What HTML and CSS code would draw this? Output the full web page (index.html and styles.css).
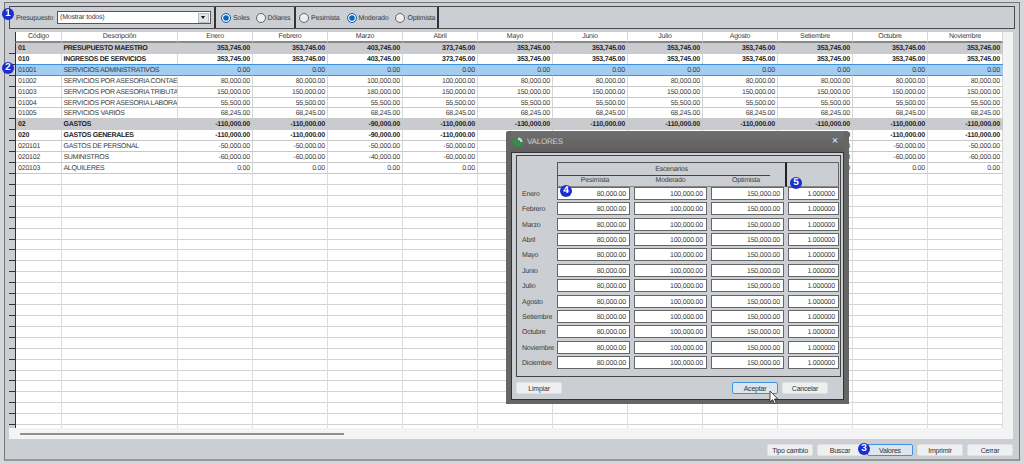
FILE: index.html
```html
<!DOCTYPE html>
<html lang="es">
<head>
<meta charset="utf-8">
<title>Presupuesto</title>
<link rel="stylesheet" href="styles.css">
</head>
<body>
<div class="window">
  <div class="toolbar">
    <div class="tgroup first">
      <span class="lbl">Presupuesto</span>
      <div class="select"><span>(Mostrar todos)</span><i class="drop"></i></div>
    </div>
    <div class="tgroup cur">
      <span class="radio on">Soles</span><span class="radio">Dólares</span>
    </div>
    <div class="tgroup esc">
      <span class="radio">Pesimista</span><span class="radio on">Moderado</span><span class="radio">Optimista</span>
    </div>
  </div>

  <div class="grid-wrap">
    <div class="grid">
      <div class="row head"><b class="rh"></b><b class="c">Código</b><b class="c">Descripción</b><b class="c">Enero</b><b class="c">Febrero</b><b class="c">Marzo</b><b class="c">Abril</b><b class="c">Mayo</b><b class="c">Junio</b><b class="c">Julio</b><b class="c">Agosto</b><b class="c">Setiembre</b><b class="c">Octubre</b><b class="c">Noviembre</b></div>
      <div class="row group"><b class="rh"></b><b>01</b><b>PRESUPUESTO MAESTRO</b><b>353,745.00</b><b>353,745.00</b><b>403,745.00</b><b>373,745.00</b><b>353,745.00</b><b>353,745.00</b><b>353,745.00</b><b>353,745.00</b><b>353,745.00</b><b>353,745.00</b><b>353,745.00</b></div>
      <div class="row strong"><b class="rh"></b><b>010</b><b>INGRESOS DE SERVICIOS</b><b>353,745.00</b><b>353,745.00</b><b>403,745.00</b><b>373,745.00</b><b>353,745.00</b><b>353,745.00</b><b>353,745.00</b><b>353,745.00</b><b>353,745.00</b><b>353,745.00</b><b>353,745.00</b></div>
      <div class="row sel"><b class="rh"></b><b>01001</b><b>SERVICIOS ADMINISTRATIVOS</b><b>0.00</b><b>0.00</b><b>0.00</b><b>0.00</b><b>0.00</b><b>0.00</b><b>0.00</b><b>0.00</b><b>0.00</b><b>0.00</b><b>0.00</b></div>
      <div class="row"><b class="rh"></b><b>01002</b><b>SERVICIOS POR ASESORIA CONTAE</b><b>80,000.00</b><b>80,000.00</b><b>100,000.00</b><b>100,000.00</b><b>80,000.00</b><b>80,000.00</b><b>80,000.00</b><b>80,000.00</b><b>80,000.00</b><b>80,000.00</b><b>80,000.00</b></div>
      <div class="row"><b class="rh"></b><b>01003</b><b>SERVICIOS POR ASESORIA TRIBUTA</b><b>150,000.00</b><b>150,000.00</b><b>180,000.00</b><b>150,000.00</b><b>150,000.00</b><b>150,000.00</b><b>150,000.00</b><b>150,000.00</b><b>150,000.00</b><b>150,000.00</b><b>150,000.00</b></div>
      <div class="row"><b class="rh"></b><b>01004</b><b>SERVICIOS POR ASESORIA LABORA</b><b>55,500.00</b><b>55,500.00</b><b>55,500.00</b><b>55,500.00</b><b>55,500.00</b><b>55,500.00</b><b>55,500.00</b><b>55,500.00</b><b>55,500.00</b><b>55,500.00</b><b>55,500.00</b></div>
      <div class="row"><b class="rh"></b><b>01005</b><b>SERVICIOS VARIOS</b><b>68,245.00</b><b>68,245.00</b><b>68,245.00</b><b>68,245.00</b><b>68,245.00</b><b>68,245.00</b><b>68,245.00</b><b>68,245.00</b><b>68,245.00</b><b>68,245.00</b><b>68,245.00</b></div>
      <div class="row group"><b class="rh"></b><b>02</b><b>GASTOS</b><b>-110,000.00</b><b>-110,000.00</b><b>-90,000.00</b><b>-110,000.00</b><b>-130,000.00</b><b>-110,000.00</b><b>-110,000.00</b><b>-110,000.00</b><b>-110,000.00</b><b>-110,000.00</b><b>-110,000.00</b></div>
      <div class="row strong"><b class="rh"></b><b>020</b><b>GASTOS GENERALES</b><b>-110,000.00</b><b>-110,000.00</b><b>-90,000.00</b><b>-110,000.00</b><b>-130,000.00</b><b>-110,000.00</b><b>-110,000.00</b><b>-110,000.00</b><b>-110,000.00</b><b>-110,000.00</b><b>-110,000.00</b></div>
      <div class="row"><b class="rh"></b><b>020101</b><b>GASTOS DE PERSONAL</b><b>-50,000.00</b><b>-50,000.00</b><b>-50,000.00</b><b>-50,000.00</b><b>-50,000.00</b><b>-50,000.00</b><b>-50,000.00</b><b>-50,000.00</b><b>-50,000.00</b><b>-50,000.00</b><b>-50,000.00</b></div>
      <div class="row"><b class="rh"></b><b>020102</b><b>SUMINISTROS</b><b>-60,000.00</b><b>-60,000.00</b><b>-40,000.00</b><b>-60,000.00</b><b>-80,000.00</b><b>-60,000.00</b><b>-60,000.00</b><b>-60,000.00</b><b>-60,000.00</b><b>-60,000.00</b><b>-60,000.00</b></div>
      <div class="row"><b class="rh"></b><b>020103</b><b>ALQUILERES</b><b>0.00</b><b>0.00</b><b>0.00</b><b>0.00</b><b>0.00</b><b>0.00</b><b>0.00</b><b>0.00</b><b>0.00</b><b>0.00</b><b>0.00</b></div>
      <div class="filler"></div>
    </div>
    <div class="hscroll"><i class="thumb"></i></div>
  </div>

  <div class="actions">
    <button class="btn">Tipo cambio</button><button class="btn">Buscar</button><button class="btn focus">Valores</button><button class="btn">Imprimir</button><button class="btn">Cerrar</button>
  </div>
</div>

<div class="dialog">
  <div class="dtitle">
    <svg class="dlogo" viewBox="0 0 10 10" width="10" height="10"><circle cx="5" cy="5" r="4.6" fill="#1f9e3a"/><path d="M5 .4A4.6 4.6 0 0 1 9.6 5H6.6A1.8 1.8 0 0 0 5 3.2Z" fill="#cfd4cf"/><circle cx="5.4" cy="5" r="2" fill="#6a6a6a"/></svg>
    <span>VALORES</span><em>×</em>
  </div>
  <div class="dbody">
    <div class="panel">
      <div class="vhead">
        <div class="vspacer"></div>
        <div class="esc-head">
          <div class="esc-top">Escenarios</div>
          <div class="esc-cols"><span>Pesimista</span><span>Moderado</span><span>Optimista</span></div>
        </div>
        <div class="fac-head"></div>
      </div>
      <div class="vrow"><label>Enero</label><span class="inp">80,000.00</span><span class="inp">100,000.00</span><span class="inp">150,000.00</span><span class="inp">1.000000</span></div>
      <div class="vrow"><label>Febrero</label><span class="inp">80,000.00</span><span class="inp">100,000.00</span><span class="inp">150,000.00</span><span class="inp">1.000000</span></div>
      <div class="vrow"><label>Marzo</label><span class="inp">80,000.00</span><span class="inp">100,000.00</span><span class="inp">150,000.00</span><span class="inp">1.000000</span></div>
      <div class="vrow"><label>Abril</label><span class="inp">80,000.00</span><span class="inp">100,000.00</span><span class="inp">150,000.00</span><span class="inp">1.000000</span></div>
      <div class="vrow"><label>Mayo</label><span class="inp">80,000.00</span><span class="inp">100,000.00</span><span class="inp">150,000.00</span><span class="inp">1.000000</span></div>
      <div class="vrow"><label>Junio</label><span class="inp">80,000.00</span><span class="inp">100,000.00</span><span class="inp">150,000.00</span><span class="inp">1.000000</span></div>
      <div class="vrow"><label>Julio</label><span class="inp">80,000.00</span><span class="inp">100,000.00</span><span class="inp">150,000.00</span><span class="inp">1.000000</span></div>
      <div class="vrow"><label>Agosto</label><span class="inp">80,000.00</span><span class="inp">100,000.00</span><span class="inp">150,000.00</span><span class="inp">1.000000</span></div>
      <div class="vrow"><label>Setiembre</label><span class="inp">80,000.00</span><span class="inp">100,000.00</span><span class="inp">150,000.00</span><span class="inp">1.000000</span></div>
      <div class="vrow"><label>Octubre</label><span class="inp">80,000.00</span><span class="inp">100,000.00</span><span class="inp">150,000.00</span><span class="inp">1.000000</span></div>
      <div class="vrow"><label>Noviembre</label><span class="inp">80,000.00</span><span class="inp">100,000.00</span><span class="inp">150,000.00</span><span class="inp">1.000000</span></div>
      <div class="vrow"><label>Diciembre</label><span class="inp">80,000.00</span><span class="inp">100,000.00</span><span class="inp">150,000.00</span><span class="inp">1.000000</span></div>
    </div>
    <div class="dactions">
      <button class="btn">Limpiar</button>
      <div class="dright"><button class="btn focus">Aceptar</button><button class="btn">Cancelar</button></div>
    </div>
  </div>
</div>

<span class="badge b1">1</span>
<span class="badge b2">2</span>
<span class="badge b3">3</span>
<span class="badge b4">4</span>
<span class="badge b5">5</span>
<svg class="cursor" viewBox="0 0 10 15" width="10" height="15"><path d="M1 1V12L3.6 9.6 5.4 13.6 7.2 12.8 5.4 9H8.8Z" fill="#fff" stroke="#333" stroke-width=".9"/></svg>
</body>
</html>
```
FILE: styles.css
```css
* { box-sizing: border-box; }
html, body { margin: 0; height: 100%; }
body {
  width: 1024px; height: 464px; overflow: hidden; position: relative;
  background: #d4d6d9;
  font: 7px/1 "Liberation Sans", sans-serif; color: #3a3a3a;
  letter-spacing: -.2px;
  text-rendering: geometricPrecision;
  filter: blur(.3px);
}
.window {
  position: absolute; left: 4px; top: 2px; width: 1016px; height: 459px;
  background: #cbced2; border: 1px solid #777; border-bottom: 2px solid #999;
  padding: 3px 4px;
  display: flex; flex-direction: column;
}
.toolbar {
  height: 23px; border: 1px solid #4a4a4a; display: flex; flex: none;
}
.tgroup { display: flex; align-items: center; border-right: 2px solid #333; height: 100%; padding-top: 1px; }
.tgroup.first { width: 206px; padding-left: 6px; }
.tgroup.cur { width: 80px; padding-left: 5px; gap: 6px; }
.tgroup.esc { width: 143px; padding-left: 3px; gap: 7px; }
.lbl { white-space: nowrap; width: 41px; flex: none; }
.select {
  width: 154px; height: 13px; margin-top: -1px; background: #fff; border: 1px solid #555;
  display: flex; align-items: center; padding-left: 2px; justify-content: space-between;
}
.drop { width: 11px; height: 10px; margin-right: 1px; background: #e2e3e5; position: relative; border: 1px solid #bbb; }
.drop::after { content: ""; position: absolute; left: 2px; top: 2.5px; border: 2.5px solid transparent; border-top: 3px solid #111; border-bottom: 0; }
.radio { display: flex; align-items: center; gap: 2px; white-space: nowrap; }
.radio::before {
  content: ""; width: 8px; height: 8px; border-radius: 50%; background: #eee; border: 1px solid #666;
}
.radio.on::before { background: #0f62b8; border-color: #0f62b8; box-shadow: inset 0 0 0 1.2px #fff; background-clip: padding-box; }

.grid-wrap {
  margin-top: 3px; margin-right: 2px; height: 407px; flex: none; background: #f3f3f3; position: relative;
  display: flex; flex-direction: column;
}
.grid { width: 994px; flex: 1; display: flex; flex-direction: column; background: #fff; min-height: 0; }
.row {
  display: grid; grid-template-columns: 7px 46px 116px repeat(11, 75px);
  height: 10.92px; flex: none; background: #fff;
}
.row > b {
  font-weight: 400; text-align: right; padding-right: 2px; white-space: nowrap; overflow: hidden;
  border-right: 1px solid #d6d6d6; border-bottom: 1px solid #c8c8c8; line-height: 11px;
}
.row > b:nth-child(2), .row > b:nth-child(3) { text-align: left; padding-left: 2px; padding-right: 0; }
.row > b:nth-child(3) { letter-spacing: -.3px; padding-left: 1.5px; }
.row > .rh { background: #cbced2; border-right: 1px solid #333; border-bottom: 1px solid #333; padding: 0; }
.head { height: 11px; }
.head > b, .head > b.c { text-align: center !important; border-bottom: 2px solid #888; padding: 0 !important; line-height: 10px; }
.head > .rh { border-bottom: 1px solid #cbced2; }
.group { background: #c9cbcf; }
.group > b { font-weight: 700; border-color: #c9cbcf; color: #222; border-bottom-color: #c9cbcf; }
.strong > b { font-weight: 700; color: #222; }
.sel { background: #a3cdf0; }
.sel > b { border-right-color: #a3cdf0; border-bottom-color: #3f93de; box-shadow: 0 -1px 0 #3f93de; }
.sel > .rh { box-shadow: none; }
.filler {
  flex: 1; min-height: 0;
  background:
    repeating-linear-gradient(to bottom, transparent 0, transparent 9.92px, #333 9.92px, #333 10.92px) 0 0 / 6px 100% no-repeat,
    linear-gradient(#cbced2, #cbced2) 0 0 / 6px 100% no-repeat,
    repeating-linear-gradient(to bottom, transparent 0, transparent 9.92px, #d2d2d2 9.92px, #d2d2d2 10.92px),
    #fff;
  position: relative;
}
.filler::before {
  content: ""; position: absolute; inset: 0;
  background:
    linear-gradient(#333, #333) 6px 0 / 1px 100% no-repeat,
    linear-gradient(#ddd, #ddd) 52px 0 / 1px 100% no-repeat,
    linear-gradient(#ddd, #ddd) 168px 0 / 1px 100% no-repeat,
    repeating-linear-gradient(to right, #ddd 0, #ddd 1px, transparent 1px, transparent 75px) 243px 0 / 751px 100% no-repeat;
}
.hscroll { height: 11px; flex: none; background: #f4f4f4; position: relative; display: flex; align-items: center; padding-left: 11px; margin-right: 11px; }
.thumb { display: block; width: 324px; height: 2px; background: #8f8f8f; }

.actions { margin-top: 5px; display: flex; justify-content: flex-end; gap: 4px; padding-right: 2px; }
.btn {
  width: 46px; height: 12px; padding: 0; border: 1px solid #dfe1e3; border-radius: 2px;
  background: #eeeff1; font: inherit; letter-spacing: inherit; color: #333; line-height: 9px;
}
.btn.focus { border-color: #3f93de; background: #dbe6ef; }

.dialog {
  position: absolute; left: 506px; top: 131px; width: 343px; height: 273px;
  background: #666; display: flex; flex-direction: column; padding: 0 5px 5px;
  border-radius: 2px 2px 0 0;
}
.dtitle {
  height: 21px; flex: none; display: flex; align-items: center; gap: 4px; padding-left: 2px; color: #cfd1d3; font-size: 8px;
  background: linear-gradient(#6f6f6f, #5f5f5f);
}
.dtitle em { margin-left: auto; margin-right: 6px; font-style: normal; font-size: 11px; color: #e6e6e6; }
.dbody { flex: 1; background: #cbced2; border: 1px solid #333; padding: 2px 4px 0; display: flex; flex-direction: column; }
.panel { height: 222px; border: 1px solid #444; margin-right: -2px; padding: 6px 5px 0 0; flex: none; }
.vhead { display: grid; grid-template-columns: 40px 230px 52px; height: 24px; }
.esc-head { border: 1px solid #555; border-right: 2px solid #222; display: flex; flex-direction: column; border-bottom-color: #888; }
.esc-top { height: 13px; text-align: center; line-height: 13px; border-bottom: 1.5px solid #444; margin-right: 15px; padding-left: 15px; }
.esc-cols { display: grid; grid-template-columns: 74px 77px 74px; text-align: center; line-height: 10px; color: #444; }
.fac-head { border: 1px solid #666; border-left: 0; border-bottom-color: #888; }
.vrow { display: grid; grid-template-columns: 40px 77px 77px 77px 51px; height: 15.36px; padding-top: 1px; align-items: start; }
.vrow label { padding-left: 5px; line-height: 15px; }
.inp { height: 13px; background: #fff; border: 1px solid #666; text-align: right; padding-right: 3px; line-height: 13px; margin-right: 4px; }
.inp:last-child { margin-right: 0; }
.dactions { display: flex; justify-content: space-between; align-items: center; height: 22px; padding-right: 11px; }
.dright { display: flex; gap: 4px; }

.badge {
  position: absolute; width: 12px; height: 12px; border-radius: 50%; background: #1b2fd0; color: #fff;
  font: 700 10px/12px "Liberation Sans", sans-serif; letter-spacing: 0; text-align: center;
}
.b1 { left: 2px; top: 8px; }
.b2 { left: 2px; top: 62px; }
.b3 { left: 858px; top: 443px; }
.b4 { left: 560px; top: 185px; }
.b5 { left: 790px; top: 177px; }
.cursor { position: absolute; left: 769px; top: 390px; }
```
